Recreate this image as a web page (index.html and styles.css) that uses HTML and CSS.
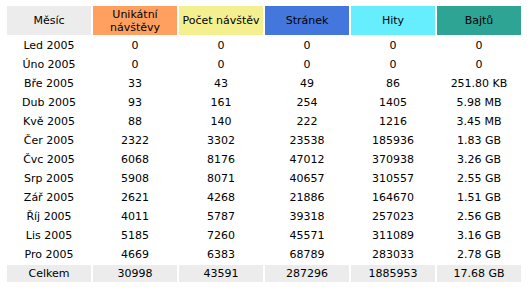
FILE: index.html
```html
<!DOCTYPE html>
<html lang="cs">
<head>
<meta charset="utf-8">
<link rel="stylesheet" href="styles.css">
</head>
<body>
<table class="stats">
<thead>
<tr>
<th class="h-month">Měsíc</th>
<th class="h-u">Unikátní<br>návštěvy</th>
<th class="h-v">Počet návštěv</th>
<th class="h-p">Stránek</th>
<th class="h-h">Hity</th>
<th class="h-k">Bajtů</th>
</tr>
</thead>
<tbody>
<tr><td>Led 2005</td><td>0</td><td>0</td><td>0</td><td>0</td><td>0</td></tr>
<tr><td>Úno 2005</td><td>0</td><td>0</td><td>0</td><td>0</td><td>0</td></tr>
<tr><td>Bře 2005</td><td>33</td><td>43</td><td>49</td><td>86</td><td>251.80 KB</td></tr>
<tr><td>Dub 2005</td><td>93</td><td>161</td><td>254</td><td>1405</td><td>5.98 MB</td></tr>
<tr><td>Kvě 2005</td><td>88</td><td>140</td><td>222</td><td>1216</td><td>3.45 MB</td></tr>
<tr><td>Čer 2005</td><td>2322</td><td>3302</td><td>23538</td><td>185936</td><td>1.83 GB</td></tr>
<tr><td>Čvc 2005</td><td>6068</td><td>8176</td><td>47012</td><td>370938</td><td>3.26 GB</td></tr>
<tr><td>Srp 2005</td><td>5908</td><td>8071</td><td>40657</td><td>310557</td><td>2.55 GB</td></tr>
<tr><td>Zář 2005</td><td>2621</td><td>4268</td><td>21886</td><td>164670</td><td>1.51 GB</td></tr>
<tr><td>Říj 2005</td><td>4011</td><td>5787</td><td>39318</td><td>257023</td><td>2.56 GB</td></tr>
<tr><td>Lis 2005</td><td>5185</td><td>7260</td><td>45571</td><td>311089</td><td>3.16 GB</td></tr>
<tr><td>Pro 2005</td><td>4669</td><td>6383</td><td>68789</td><td>283033</td><td>2.78 GB</td></tr>
</tbody>
<tfoot>
<tr class="total"><td>Celkem</td><td>30998</td><td>43591</td><td>287296</td><td>1885953</td><td>17.68 GB</td></tr>
</tfoot>
</table>
</body>
</html>
```
FILE: styles.css
```css
html, body {
  margin: 0;
  padding: 0;
  background: #ffffff;
}
body {
  padding: 4px 0 0 5px;
  font-family: "DejaVu Sans", Verdana, sans-serif;
  font-size: 11px;
  color: #000000;
}
.stats {
  border-collapse: separate;
  border-spacing: 2px;
  table-layout: fixed;
  width: 518px;
}
.stats th,
.stats td {
  width: 84px;
  padding: 0;
  text-align: center;
  vertical-align: middle;
  white-space: nowrap;
}
.stats th {
  height: 29px;
  font-weight: normal;
  line-height: 13px;
}
.stats td {
  height: 17px;
  line-height: 13px;
}
.h-month { background: #ececec; }
.h-u { background: #ffa060; }
.h-v { background: #f4f090; }
.h-p { background: #4477dd; }
.h-h { background: #66eeff; }
.h-k { background: #2ea495; }
.total td { background: #ececec; }
```
